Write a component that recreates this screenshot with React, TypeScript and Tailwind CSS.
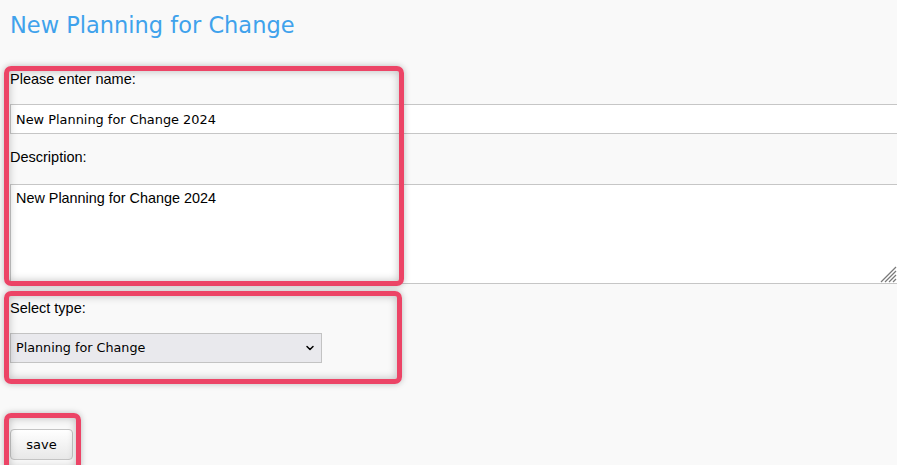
import { ChevronDown } from "lucide-react";

const sans = "font-['Liberation_Sans',Arial,sans-serif]";
const verdana = "font-['DejaVu_Sans',Verdana,sans-serif]";

function Label({ children }: { children: string }) {
  return <div className={`${sans} text-[14.5px] leading-[20px] text-black`}>{children}</div>;
}

function ResizeGrip() {
  return (
    <svg width="17" height="17" viewBox="0 0 17 17" className="pointer-events-none absolute bottom-[1px] right-[1px]">
      <g stroke="#7a7a7a" strokeWidth="1.2">
        <line x1="1" y1="16" x2="16" y2="1" />
        <line x1="5" y1="16" x2="16" y2="5" />
        <line x1="9" y1="16" x2="16" y2="9" />
        <line x1="13" y1="16" x2="16" y2="13" />
      </g>
    </svg>
  );
}

export default function App() {
  return (
    <div className="relative h-[465px] w-[897px] overflow-hidden bg-[#f9f9f9] pl-[10px]">
      <h1 className={`${verdana} pt-[11px] text-[22.5px] leading-[28px] text-[#3fa2ec]`}>
        New Planning for Change
      </h1>

      <div className="mt-[30px] flex flex-col items-start">
        <Label>Please enter name:</Label>
        <input
          readOnly
          defaultValue="New Planning for Change 2024"
          className={`${verdana} mt-[15px] block h-[30px] w-[889px] border border-[#c6c6c6] bg-white px-[5px] text-[12.9px] text-black outline-none`}
        />

        <div className="mt-[13px]">
          <Label>Description:</Label>
        </div>
        <div className="relative mt-[17px] h-[100px] w-[888px]">
          <textarea
            readOnly
            defaultValue="New Planning for Change 2024"
            className={`${sans} block h-[100px] w-[888px] resize-none border border-[#c6c6c6] bg-white px-[5px] py-[4px] text-[14.4px] leading-[18px] text-black outline-none`}
          />
          <ResizeGrip />
        </div>

        <div className="mt-[14px]">
          <Label>Select type:</Label>
        </div>
        <div className="relative mt-[15px] h-[30px] w-[312px]">
          <select
            defaultValue="pfc"
            className={`${verdana} block h-[30px] w-[312px] appearance-none border border-[#c3c3c3] bg-[#e9e9ed] px-[5px] text-[12.75px] text-black outline-none`}
          >
            <option value="pfc">Planning for Change</option>
          </select>
          <ChevronDown className="pointer-events-none absolute right-[6px] top-[9px] h-[12px] w-[12px] text-black" strokeWidth={3} />
        </div>

        <button
          className={`${verdana} mt-[66px] block h-[31px] w-[63px] rounded-[4px] border border-[#c4c4c4] bg-gradient-to-b from-white to-[#e8e8e8] text-[13px] text-black`}
        >
          save
        </button>
      </div>

      {/* annotation boxes drawn over the form */}
      <div className="pointer-events-none absolute left-[4px] top-[66px] h-[220px] w-[400px] rounded-[7px] border-[5px] border-[#ec4466] shadow-[inset_0_0_8px_rgba(0,0,0,0.25),0_0_6px_rgba(0,0,0,0.25)]" />
      <div className="pointer-events-none absolute left-[4px] top-[291px] h-[93px] w-[398px] rounded-[7px] border-[5px] border-[#ec4466] shadow-[inset_0_0_8px_rgba(0,0,0,0.25),0_0_6px_rgba(0,0,0,0.25)]" />
      <div className="pointer-events-none absolute left-[4px] top-[413px] h-[60px] w-[77px] rounded-[7px] border-[5px] border-[#ec4466] shadow-[inset_0_0_8px_rgba(0,0,0,0.25),0_0_6px_rgba(0,0,0,0.25)]" />
    </div>
  );
}
